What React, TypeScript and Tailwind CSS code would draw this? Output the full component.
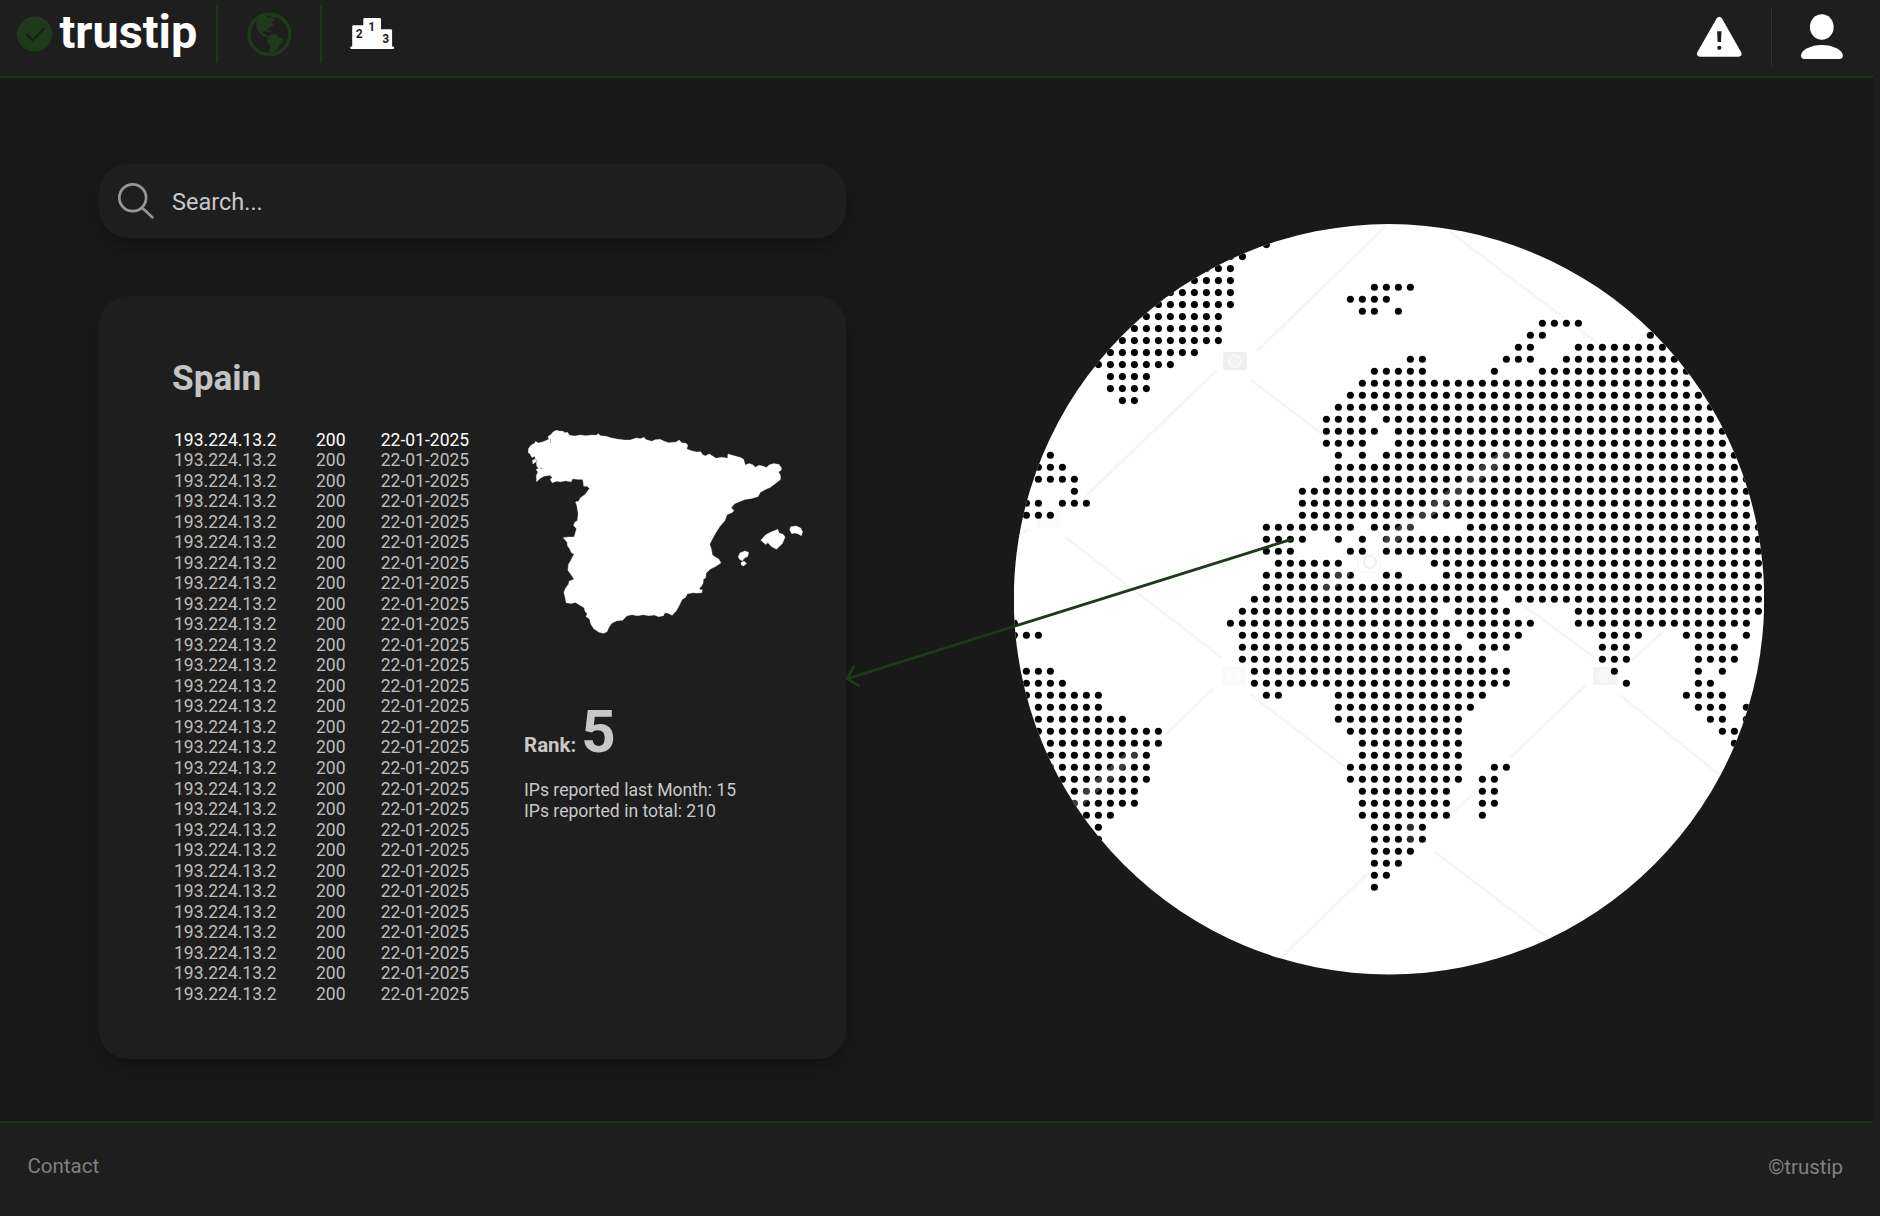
import React from "react";

type Range = number | [number, number];

// Each entry: one lattice row, listing the filled columns or column ranges.
const WORLD: Range[][] = [
  [[30, 33]],
  [[28, 31]],
  [29, 30, 32],
  [[44, 47]],
  [43, 44, 53],
  [42, 43, [47, 54]],
  [33, 34, [41, 43], [46, 55]],
  [[30, 34], 40, [44, 56]],
  [[29, 56]],
  [[28, 57]],
  [[27, 58]],
  [[26, 29], [31, 58]],
  [[26, 30], [32, 59]],
  [[26, 29], [32, 59]],
  [3, 27, 29, [31, 60]],
  [[2, 4], [27, 60]],
  [[2, 5], [26, 61]],
  [5, [24, 61]],
  [1, 2, [4, 6], [24, 61]],
  [[1, 3], [24, 61]],
  [[21, 28], [30, 33], [38, 62]],
  [[21, 24], 27, 29, [31, 62]],
  [[21, 23], 28, 29, [31, 62]],
  [[22, 27], [35, 62]],
  [[21, 28], 31, 32, [36, 62]],
  [[21, 62]],
  [[20, 40], [42, 62]],
  [[19, 35], [37, 41], [47, 62]],
  [0, [18, 43], [47, 61]],
  [[0, 2], [19, 36], [38, 42], [49, 52], [56, 59], 61],
  [[19, 37], [39, 41], [49, 51], [57, 60]],
  [[19, 39], [49, 51], [57, 60]],
  [[1, 3], [20, 41], 50, 57, 59],
  [[1, 4], [20, 41], 51, 57, 58],
  [[1, 7], 21, 22, [27, 39], [56, 59]],
  [[2, 7], [27, 38], [57, 59], 61],
  [[2, 9], [27, 37], 58, 59, 61],
  [[2, 12], [28, 37], 59, 60],
  [[3, 12], [29, 37], 60],
  [[3, 11], [29, 37]],
  [[3, 11], [28, 37], 40, 41],
  [[4, 11], [28, 37], 39, 40],
  [[5, 10], [29, 36], 39, 40],
  [[5, 10], [29, 36], 39, 40],
  [[6, 8], [29, 36], 39],
  [7, [30, 34]],
  [7, [30, 34]],
  [[30, 33]],
  [[30, 32]],
  [30, 31],
  [30],
];

const GREENLAND: Range[][] = [
  [21],
  [18, 19],
  [[16, 18]],
  [[15, 18]],
  [[13, 18]],
  [[12, 18]],
  [[11, 17]],
  [[10, 17]],
  [[9, 17]],
  [[8, 15]],
  [[7, 13]],
  [[8, 11]],
  [[8, 11]],
  [9, 10],
];

function dots(rows: Range[][], top: number) {
  const out: React.ReactNode[] = [];
  rows.forEach((row, r) => {
    row.forEach((range) => {
      const [from, to] = typeof range === "number" ? [range, range] : range;
      for (let c = from; c <= to; c++) {
        out.push(<circle key={`${top}-${r}-${c}`} cx={1014.4 + 12 * c} cy={top + 12 * r} r={3.55} />);
      }
    });
  });
  return out;
}

function Camera({ x, y, o }: { x: number; y: number; o: number }) {
  return (
    <g opacity={o}>
      <rect x={x - 12} y={y - 9} width="24" height="18" rx="2" fill="#efefef" />
      <circle cx={x} cy={y} r="6" fill="#f2f2f2" stroke="#f8f8f8" strokeWidth="2" />
    </g>
  );
}

function Globe() {
  return (
    <svg viewBox="1014 224 750 751" className="h-[751px] w-[750px] shrink-0">
      <defs>
        <clipPath id="disc">
          <circle cx="1389" cy="599.3" r="375.2" />
        </clipPath>
      </defs>
      <g clipPath="url(#disc)">
        <rect x="1013" y="223" width="753" height="753" fill="#fff" />
        <path
          d="M1388 224 1257 351M1216 371 1087 495M1251 380 1330 440M1028 529 1014 541M1065 537 1222 658M1214 688 1165 735M1250 694 1345 767M1450 232 1600 345M1650 330 1635 345M1282 957 1368 873M1585 686 1510 758M1478 789 1450 816M1435 852 1548 938M1620 695 1720 775M1520 603 1595 658M1632 660 1668 627"
          stroke="#f6f6f6"
          strokeWidth="2.6"
          fill="none"
        />
        <Camera x={1235} y={361} o={1} />
        <Camera x={1234} y={676} o={0.3} />
        <Camera x={1605} y={676} o={0.7} />
        <Camera x={1049} y={519} o={0.3} />
        <rect x="1358" y="554" width="22" height="18" rx="4" fill="none" stroke="#fafafa" strokeWidth="2" />
        <circle cx="1370" cy="562" r="6" fill="none" stroke="#f0f0f0" strokeWidth="2" />
        <g fill="#050505">
          {dots(WORLD, 287.2)}
          {dots(GREENLAND, 244.6)}
        </g>
        <g stroke="#fff" strokeLinecap="round" fill="none">
          <path d="M1390 540 1508 453" strokeWidth="12" opacity="0.22" />
          <path d="M1325 590 1345 572M1078 802 1135 752" strokeWidth="11" opacity="0.22" />
          <path d="M1411 827v12" strokeWidth="8" opacity="0.15" />
        </g>
      </g>
    </svg>
  );
}

function SpainMap() {
  return (
    <svg viewBox="82 58 828 614" className="h-[204px] w-[275px]" fill="#fff" stroke="#fff" strokeWidth="1" strokeLinejoin="round">
      <path d="M168 59 176 61 188 62 192 66 201 65 207 74 222 76 240 73 255 75 275 73 287 74 294 69 300 75 318 77 330 81 350 85 372 88 390 88 408 82 420 84 431 80 438 87 455 92 465 87 480 86 492 92 505 96 528 94 537 88 545 96 558 98 563 104 560 115 573 120 590 124 602 123 607 132 616 136 628 130 640 138 648 143 665 140 683 143 684 130 700 135 722 141 731 146 736 163 748 159 760 163 766 170 778 164 790 167 800 171 808 163 822 159 838 162 844 170 845 178 836 184 842 194 842 207 828 218 812 230 795 238 781 246 775 258 755 264 735 267 720 273 704 280 694 292 702 300 697 306 681 313 675 330 660 348 647 368 637 386 629 402 634 416 637 434 648 442 656 446 663 458 645 470 630 477 618 489 617 503 610 507 609 520 604 528 598 534 600 539 607 539 605 548 590 549 578 548 562 551 556 562 546 568 538 585 528 603 516 616 504 610 494 608 490 617 475 620 462 615 445 617 430 614 412 617 395 614 380 617 367 631 350 632 335 639 326 651 320 665 310 670 296 667 280 656 271 642 267 626 257 620 260 610 254 605 251 593 236 584 225 577 212 580 197 578 194 563 190 547 195 534 204 522 206 513 221 507 214 497 202 480 204 462 210 452 216 440 221 432 212 427 208 416 201 407 200 396 188 382 203 380 221 380 228 355 219 345 223 336 231 330 233 310 229 285 225 275 235 272 240 262 254 252 267 234 260 227 250 227 247 207 230 206 216 205 212 214 195 211 180 214 168 212 155 217 149 207 155 201 148 194 130 197 119 203 108 214 107 195 112 184 106 177 114 174 108 166 107 153 97 160 95 150 104 145 103 137 94 141 88 130 82 125 84 113 92 103 102 98 105 92 113 97 128 93 145 86 142 78 152 71 158 63Z" />
      <path d="M783 390 797 374 812 366 834 357 838 368 850 372 856 380 848 400 830 417 815 409 804 397 798 403Z" />
      <path d="M870 358 873 349 890 347 903 353 909 365 905 376 896 371 886 368 876 370Z" />
      <path d="M715 440 720 428 735 422 746 426 744 438 732 445 728 452 719 447ZM724 456 733 453 740 460 731 467 724 464Z" />
      <path d="M150 84v12M118 174h7M105 146l5 8" stroke="#555" strokeWidth="1.5" />
    </svg>
  );
}

const ROWS = Array.from({ length: 28 }, () => ["193.224.13.2", "200", "22-01-2025"]);

export default function App() {
  return (
    <div className="flex h-[1216px] w-[1880px] flex-col overflow-hidden bg-[#1e1e1e] font-['Roboto',sans-serif] text-[#c8c8c8]">
      <header className="mr-[7px] flex h-[78px] shrink-0 items-start border-b-2 border-[#1e341c] pl-[17px]">
        <svg viewBox="0 0 36 36" className="mt-4 h-9 w-9 shrink-0">
          <circle cx="17.7" cy="18" r="17.7" fill="#1e3a1a" />
          <path d="M10.2 18.5 15.4 24.4 26.5 13" fill="none" stroke="#1e1e1e" strokeWidth="2.4" strokeLinecap="round" strokeLinejoin="round" />
        </svg>
        <span className="mt-2 w-[163px] pl-[6.5px] text-[46.8px] font-bold leading-[48px] text-white">trustip</span>
        <div className="mt-[5px] h-[58px] w-[2px] bg-[#1e371b]" />
        <svg viewBox="740 35 135 135" className="ml-[29px] mt-[11.5px] h-[45px] w-[45px] shrink-0" fill="#1e3a1a">
          <circle cx="807" cy="102" r="61" fill="none" stroke="#1e3a1a" strokeWidth="10" />
          <path d="M782 48 796 44 802 52 812 50 820 55 819 62 811 65 818 70 820 76 810 79 803 86 799 93 788 93 787 98 794 100 797 105 804 108 802 112 788 107 778 98 771 87 767 76 769 64Z" />
          <path d="M801 91h12v4h-12zM810 43 828 46 824 53 813 50Z" />
          <path d="M803 110 815 101 830 104 834 111 848 117 846 127 837 134 833 145 824 153 814 163 803 163 808 146 808 134 800 125 802 114Z" />
        </svg>
        <div className="ml-[28px] mt-[5px] h-[58px] w-[2px] bg-[#1e371b]" />
        <svg viewBox="350 17 46 33" className="ml-7 mt-[17px] h-[33px] w-[46px] shrink-0">
          <path d="M351.5 49a1.2 1.2 0 0 1 0-2.6h.7V26.6q0-1.4 1.4-1.4h9.7v-5.8q0-1.4 1.4-1.4h14.9q1.4 0 1.4 1.4v9.8h9.7q1.4 0 1.4 1.4v15.8h.8a1.2 1.2 0 0 1 0 2.6z" fill="#fff" />
          <g fill="#1e1e1e" className="font-['Roboto'] text-[12px] font-bold" textAnchor="middle">
            <text x="359.3" y="38.3">2</text>
            <text x="371.7" y="31.2">1</text>
            <text x="385.6" y="42.6">3</text>
          </g>
        </svg>
        <div className="flex-1" />
        <svg viewBox="1696 16 47 42" className="mt-4 h-[42px] w-[47px] shrink-0">
          <path d="M1716.6 18.4q2.7-3.2 5.4 0L1741.3 52.4q1.3 3.8-2.6 4.4H1699.8q-3.9-.6-2.6-4.4Z" fill="#fff" />
          <path d="M1717.1 31.2h4.4l-.5 10.8h-3.4z" fill="#1e1e1e" />
          <circle cx="1719.3" cy="47.8" r="2.1" fill="#1e1e1e" />
        </svg>
        <div className="ml-7 mt-2 h-[58px] w-px bg-[#1f3c1c]" />
        <svg viewBox="1800 13 44 47" className="ml-7 mr-[29px] mt-[13px] h-[47px] w-[44px] shrink-0" fill="#fff">
          <ellipse cx="1821.8" cy="27" rx="11.9" ry="12.8" />
          <path d="M1804 59q-3-.3-3-3.4c0-5.6 9.8-10.6 20.9-10.6s20.9 5 20.9 10.6q0 3.1-3 3.4z" />
        </svg>
      </header>

      <main className="relative mr-[6px] flex h-[1043px] shrink-0 bg-[#191919] pl-[99px]">
        <section className="flex w-[747px] flex-col gap-[58px] pt-[86px]">
          <div className="flex h-[74px] items-center rounded-[29px] bg-[#1e1e1e] pl-[19px] shadow-[0_9px_18px_-2px_rgba(0,0,0,0.3)]">
            <svg viewBox="0 0 36 36" className="h-9 w-9 shrink-0" fill="none" stroke="#969696" strokeWidth="2.7" strokeLinecap="round">
              <circle cx="14.7" cy="14.8" r="13.4" />
              <path d="M24.4 25 34.3 34.3" />
            </svg>
            <span className="pl-[18px] pt-[4px] text-[23.5px] leading-none">Search...</span>
          </div>

          <div className="h-[762.5px] rounded-[29px] bg-[#1e1e1e] pl-[73px] pt-16 shadow-[0_9px_18px_-2px_rgba(0,0,0,0.3)]">
            <h1 className="pt-px text-[35.2px] font-bold leading-[35px] text-[#c4c4c4]">Spain</h1>
            <div className="flex pt-[33.5px]">
              <ul className="w-[352px] pl-[2px] text-[17.55px] leading-[20.53px] text-[#bdbdbd]">
                {ROWS.map((row, i) => (
                  <li key={i} className={i === 0 ? "grid grid-cols-[142px_64.7px_1fr] text-white" : "grid grid-cols-[142px_64.7px_1fr]"}>
                    {row.map((cell) => (
                      <span key={cell}>{cell}</span>
                    ))}
                  </li>
                ))}
              </ul>
              <div className="flex flex-col">
                <div className="pl-[4px]">
                  <SpainMap />
                </div>
                <div className="mt-[68px] flex items-baseline gap-[5px] font-bold leading-[60px] text-[#c8c8c8]">
                  <span className="text-[20.5px]">Rank:</span>
                  <span className="text-[60px]">5</span>
                </div>
                <p className="mt-[5.5px] text-[17.6px] leading-[20.53px]">
                  IPs reported last Month: 15
                  <br />
                  IPs reported in total: 210
                </p>
              </div>
            </div>
          </div>
        </section>

        <section className="ml-[168px] mt-[146px]">
          <Globe />
        </section>

        <svg viewBox="840 530 460 160" className="absolute left-[840px] top-[452px] h-[160px] w-[460px]" fill="none" stroke="#1e3a1a" strokeWidth="2.8" strokeLinecap="round">
          <path d="M1291.5 539.3 847 678.8M853.5 666.8 847 678.8 858.8 685.6" />
        </svg>
      </main>

      <footer className="mr-[7px] flex flex-1 items-start justify-between border-t-2 border-[#1c331a] pl-[27.5px] pr-[30px] text-[20.5px] leading-6 text-[#808080]">
        <span className="mt-[31px]">Contact</span>
        <span className="mt-[32px]">©trustip</span>
      </footer>
    </div>
  );
}
